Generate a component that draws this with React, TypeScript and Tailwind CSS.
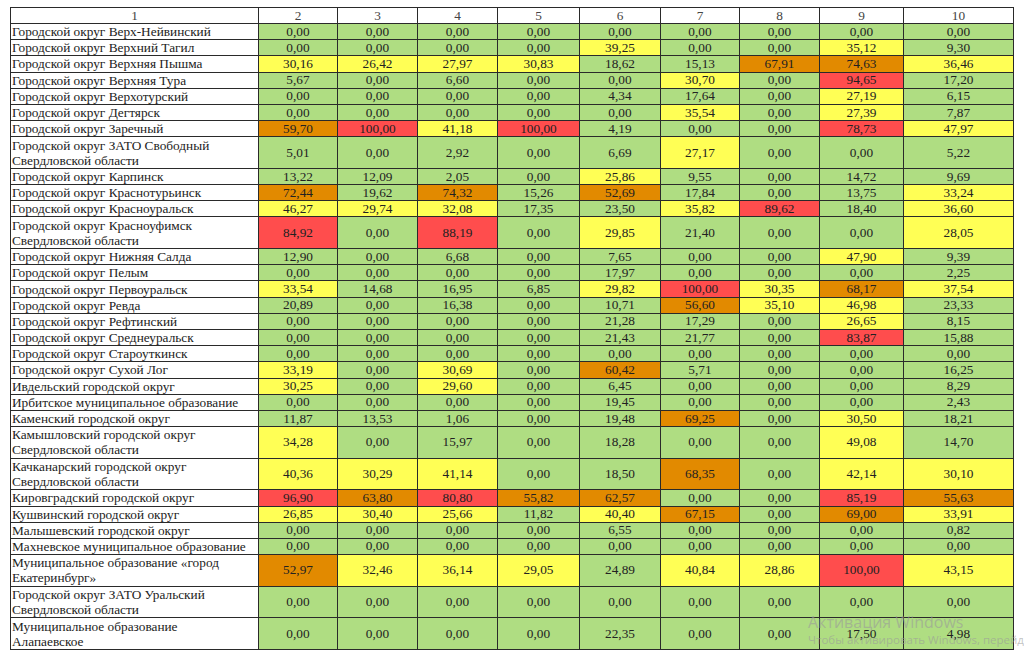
const rows: [string, string[]][] = [
  ["Городской округ Верх-Нейвинский", ["0,00", "0,00", "0,00", "0,00", "0,00", "0,00", "0,00", "0,00", "0,00"]],
  ["Городской округ Верхний Тагил", ["0,00", "0,00", "0,00", "0,00", "39,25", "0,00", "0,00", "35,12", "9,30"]],
  ["Городской округ Верхняя Пышма", ["30,16", "26,42", "27,97", "30,83", "18,62", "15,13", "67,91", "74,63", "36,46"]],
  ["Городской округ Верхняя Тура", ["5,67", "0,00", "6,60", "0,00", "0,00", "30,70", "0,00", "94,65", "17,20"]],
  ["Городской округ Верхотурский", ["0,00", "0,00", "0,00", "0,00", "4,34", "17,64", "0,00", "27,19", "6,15"]],
  ["Городской округ Дегтярск", ["0,00", "0,00", "0,00", "0,00", "0,00", "35,54", "0,00", "27,39", "7,87"]],
  ["Городской округ Заречный", ["59,70", "100,00", "41,18", "100,00", "4,19", "0,00", "0,00", "78,73", "47,97"]],
  ["Городской округ ЗАТО Свободный\nСвердловской области", ["5,01", "0,00", "2,92", "0,00", "6,69", "27,17", "0,00", "0,00", "5,22"]],
  ["Городской округ Карпинск", ["13,22", "12,09", "2,05", "0,00", "25,86", "9,55", "0,00", "14,72", "9,69"]],
  ["Городской округ Краснотурьинск", ["72,44", "19,62", "74,32", "15,26", "52,69", "17,84", "0,00", "13,75", "33,24"]],
  ["Городской округ Красноуральск", ["46,27", "29,74", "32,08", "17,35", "23,50", "35,82", "89,62", "18,40", "36,60"]],
  ["Городской округ Красноуфимск\nСвердловской области", ["84,92", "0,00", "88,19", "0,00", "29,85", "21,40", "0,00", "0,00", "28,05"]],
  ["Городской округ Нижняя Салда", ["12,90", "0,00", "6,68", "0,00", "7,65", "0,00", "0,00", "47,90", "9,39"]],
  ["Городской округ Пелым", ["0,00", "0,00", "0,00", "0,00", "17,97", "0,00", "0,00", "0,00", "2,25"]],
  ["Городской округ Первоуральск", ["33,54", "14,68", "16,95", "6,85", "29,82", "100,00", "30,35", "68,17", "37,54"]],
  ["Городской округ Ревда", ["20,89", "0,00", "16,38", "0,00", "10,71", "56,60", "35,10", "46,98", "23,33"]],
  ["Городской округ Рефтинский", ["0,00", "0,00", "0,00", "0,00", "21,28", "17,29", "0,00", "26,65", "8,15"]],
  ["Городской округ Среднеуральск", ["0,00", "0,00", "0,00", "0,00", "21,43", "21,77", "0,00", "83,87", "15,88"]],
  ["Городской округ Староуткинск", ["0,00", "0,00", "0,00", "0,00", "0,00", "0,00", "0,00", "0,00", "0,00"]],
  ["Городской округ Сухой Лог", ["33,19", "0,00", "30,69", "0,00", "60,42", "5,71", "0,00", "0,00", "16,25"]],
  ["Ивдельский городской округ", ["30,25", "0,00", "29,60", "0,00", "6,45", "0,00", "0,00", "0,00", "8,29"]],
  ["Ирбитское муниципальное образование", ["0,00", "0,00", "0,00", "0,00", "19,45", "0,00", "0,00", "0,00", "2,43"]],
  ["Каменский городской округ", ["11,87", "13,53", "1,06", "0,00", "19,48", "69,25", "0,00", "30,50", "18,21"]],
  ["Камышловский городской округ\nСвердловской области", ["34,28", "0,00", "15,97", "0,00", "18,28", "0,00", "0,00", "49,08", "14,70"]],
  ["Качканарский городской округ\nСвердловской области", ["40,36", "30,29", "41,14", "0,00", "18,50", "68,35", "0,00", "42,14", "30,10"]],
  ["Кировградский городской округ", ["96,90", "63,80", "80,80", "55,82", "62,57", "0,00", "0,00", "85,19", "55,63"]],
  ["Кушвинский городской округ", ["26,85", "30,40", "25,66", "11,82", "40,40", "67,15", "0,00", "69,00", "33,91"]],
  ["Малышевский городской округ", ["0,00", "0,00", "0,00", "0,00", "6,55", "0,00", "0,00", "0,00", "0,82"]],
  ["Махневское муниципальное образование", ["0,00", "0,00", "0,00", "0,00", "0,00", "0,00", "0,00", "0,00", "0,00"]],
  ["Муниципальное образование «город\nЕкатеринбург»", ["52,97", "32,46", "36,14", "29,05", "24,89", "40,84", "28,86", "100,00", "43,15"]],
  ["Городской округ ЗАТО Уральский\nСвердловской области", ["0,00", "0,00", "0,00", "0,00", "0,00", "0,00", "0,00", "0,00", "0,00"]],
  ["Муниципальное образование\nАлапаевское", ["0,00", "0,00", "0,00", "0,00", "22,35", "0,00", "0,00", "17,50", "4,98"]],
];

const widths = ["w-[248px]", "w-[79px]", "w-[80px]", "w-[80px]", "w-[82px]", "w-[81px]", "w-[79px]", "w-[80px]", "w-[84px]", "w-[110px]"];

// same thresholds as the source sheet: <25 green, <50 yellow, <75 orange, else red
const fill = (v: string) => {
  const n = parseFloat(v.replace(",", "."));
  if (n >= 75) return "bg-[#ff4d4d]";
  if (n >= 50) return "bg-[#e28a00]";
  if (n >= 25) return "bg-[#ffff55]";
  return "bg-[#afdd82]";
};

export default function App() {
  return (
    <div className="relative w-[1024px] h-[657px] overflow-hidden bg-white font-['Liberation_Serif','Times_New_Roman',serif] text-[13.3px] text-[#222]">
      <div className="pt-[7px] pl-[10px]">
        <table className="table-fixed border-collapse w-[1003px]">
          <colgroup>
            {widths.map((w, i) => (
              <col key={i} className={w} />
            ))}
          </colgroup>
          <thead>
            <tr className="h-[16px]">
              {widths.map((_, i) => (
                <th key={i} className="border border-[#2a2a2a] p-0 font-normal text-center leading-[14px] text-[#444]">
                  {i + 1}
                </th>
              ))}
            </tr>
          </thead>
          <tbody>
            {rows.map(([name, vals]) => {
              const tall = name.includes("\n");
              return (
                <tr key={name} className={tall ? "h-[31.6px]" : "h-[16.2px]"}>
                  <td className="border border-[#2a2a2a] p-0 pl-[1px] text-left whitespace-pre leading-[15px] bg-white">
                    {name}
                  </td>
                  {vals.map((v, i) => (
                    <td key={i} className={`border border-[#2a2a2a] p-0 text-center leading-[14px] ${fill(v)}`}>
                      {v}
                    </td>
                  ))}
                </tr>
              );
            })}
          </tbody>
        </table>
      </div>

      {/* windows activation watermark */}
      <div className="absolute left-[808px] top-[612px] font-['Open_Sans','Noto_Sans',sans-serif] text-[#9a9a9a]/60 whitespace-nowrap pointer-events-none">
        <div className="text-[16px] leading-[20px]">Активация Windows</div>
        <div className="text-[11.5px] leading-[16px]">Чтобы активировать Windows, перейдите в раздел "Параметры".</div>
      </div>
    </div>
  );
}
